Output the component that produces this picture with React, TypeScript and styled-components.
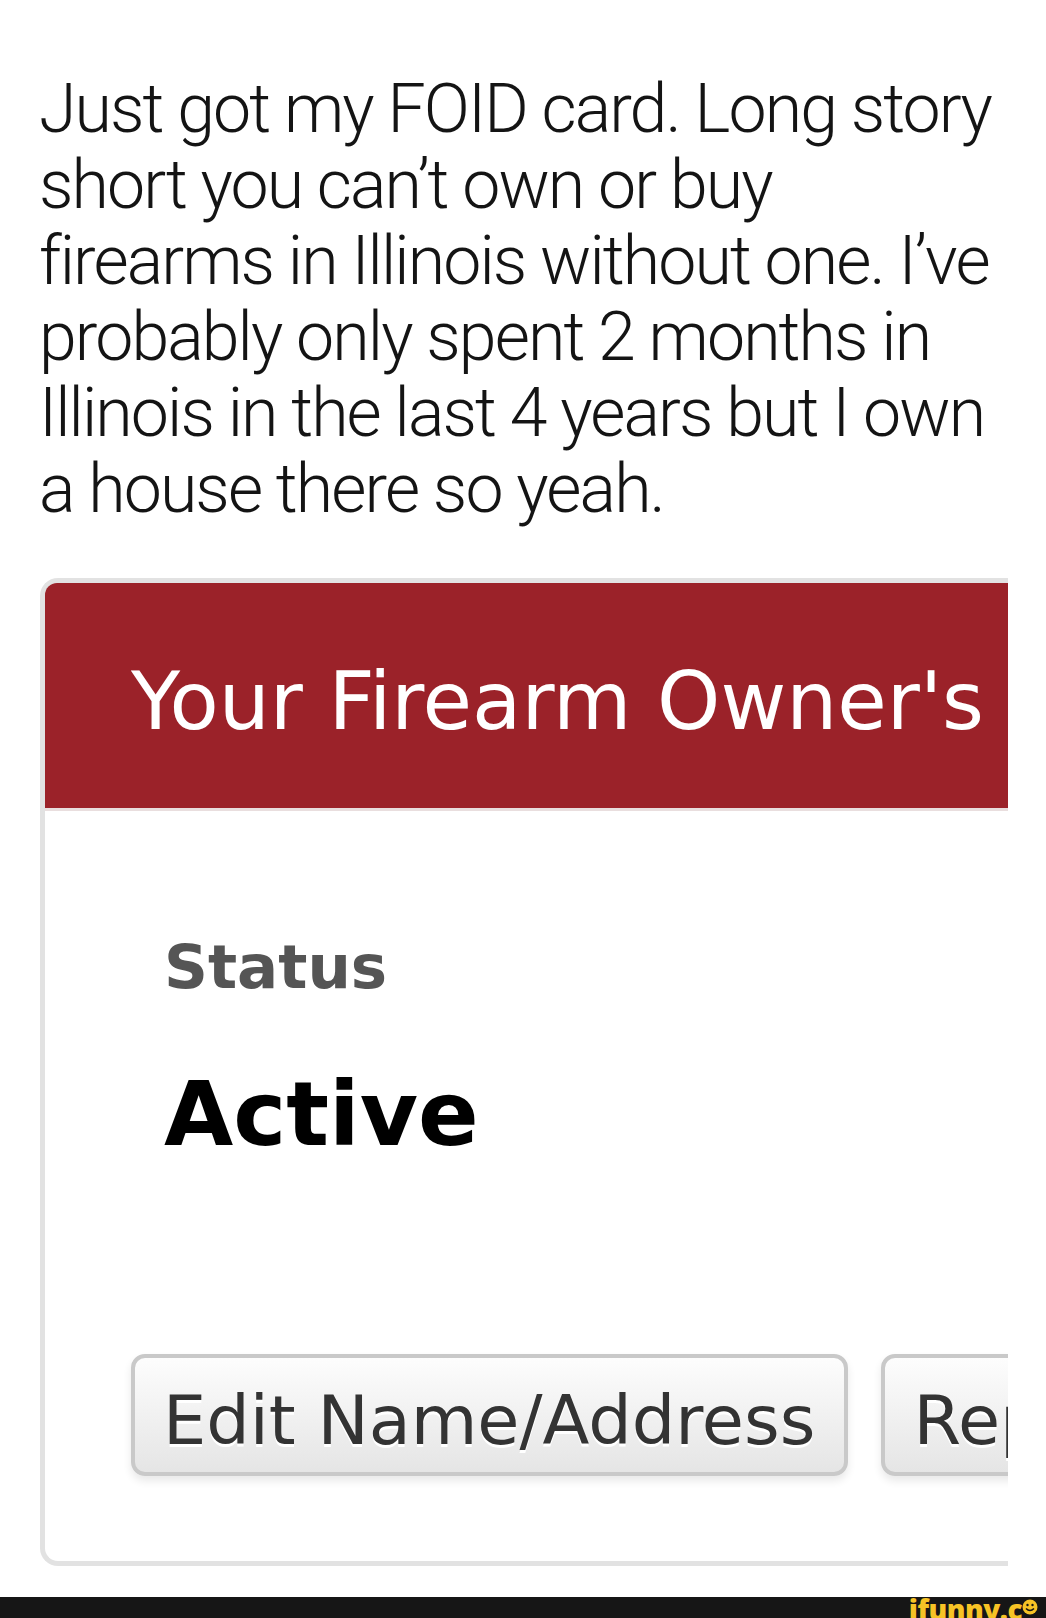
import styled, { createGlobalStyle } from "styled-components";

const GlobalStyle = createGlobalStyle`
  html, body {
    margin: 0;
    padding: 0;
    background: #ffffff;
  }
  body {
    width: 1046px;
    overflow-x: hidden;
  }
`;

const lines = [
  "Just got my FOID card. Long story",
  "short you can’t own or buy",
  "firearms in Illinois without one. I’ve",
  "probably only spent 2 months in",
  "Illinois in the last 4 years but I own",
  "a house there so yeah.",
];

const Page = styled.main`
  display: flex;
  flex-direction: column;
  width: 1046px;
`;

const Post = styled.section`
  padding: 71px 0 0 39px;
  color: #141414;
  font-family: Roboto, "Liberation Sans", Arial, sans-serif;
  font-weight: 300;
  font-size: 68px;
  line-height: 76px;
  letter-spacing: -1.9px;
`;

const PostLine = styled.div`
  white-space: nowrap;
`;

/* the portal is cut off at the right edge of the capture */
const Viewport = styled.div`
  margin-top: 51px;
  padding-left: 40px;
  width: 1008px;
  box-sizing: border-box;
  overflow: hidden;
`;

const Card = styled.div`
  width: 1100px;
  border: 5px solid #e2e2e2;
  border-right: none;
  border-radius: 18px 0 0 18px;
  background: #fff;
  display: flex;
  flex-direction: column;
`;

const CardHeader = styled.header`
  background: #9b2229;
  border-top-left-radius: 12px;
  border-bottom: 3px solid #e9dede;
  padding: 78px 0 67px 86px;
  color: #fff;
  font-family: "DejaVu Sans", Verdana, sans-serif;
  font-size: 80.5px;
  line-height: 80px;
  white-space: nowrap;
`;

const CardBody = styled.div`
  display: flex;
  flex-direction: column;
  padding: 125px 0 85px 0;
`;

const Field = styled.div`
  display: flex;
  flex-direction: column;
  gap: 73px;
  padding-left: 119px;
  font-family: "DejaVu Sans", Verdana, sans-serif;
  font-weight: bold;
`;

const FieldLabel = styled.div`
  color: #555555;
  font-size: 61px;
  line-height: 61px;
`;

const FieldValue = styled.div`
  color: #000;
  font-size: 89.5px;
  line-height: 89px;
`;

const Actions = styled.div`
  display: flex;
  gap: 33px;
  margin-top: 195px;
  padding-left: 86px;
`;

const Button = styled.button`
  flex: none;
  height: 122px;
  box-sizing: border-box;
  padding: 28px 29px 18px 28px;
  border: 4px solid #c9c9c9;
  border-radius: 14px;
  background: linear-gradient(#fdfdfd, #e5e5e5);
  box-shadow: 0 5px 8px rgba(0, 0, 0, 0.09);
  color: #333;
  font-family: "DejaVu Sans", Verdana, sans-serif;
  font-size: 68.5px;
  line-height: 68px;
  text-shadow: 0 3px 0 #fff;
  white-space: nowrap;
  display: flex;
  align-items: flex-start;
`;

const Spacer = styled.div`
  height: 31px;
`;

const WatermarkBar = styled.footer`
  height: 21px;
  background: #161616;
  display: flex;
  justify-content: flex-end;
  align-items: flex-start;
  padding-right: 8px;
  overflow: hidden;
`;

const Brand = styled.span`
  display: flex;
  align-items: flex-start;
  color: #f7c325;
  font-family: "Open Sans", sans-serif;
  font-weight: 800;
  font-size: 28px;
  line-height: 28px;
  letter-spacing: -0.5px;
  margin-top: -2px;
`;

const Smiley = () => (
  <svg width="16" height="16" viewBox="0 0 16 16" style={{ marginTop: 4 }}>
    <circle cx="8" cy="8" r="7.5" fill="#f7c325" />
    <circle cx="5.5" cy="6" r="1.2" fill="#161616" />
    <circle cx="10.5" cy="6" r="1.2" fill="#161616" />
    <path d="M4 9.5 Q8 13.5 12 9.5" stroke="#161616" strokeWidth="1.6" fill="none" />
  </svg>
);

export default function App() {
  return (
    <>
      <GlobalStyle />
      <Page>
        <Post>
          {lines.map((l) => (
            <PostLine key={l}>{l}</PostLine>
          ))}
        </Post>
        <Viewport>
          <Card>
            <CardHeader>Your Firearm Owner's</CardHeader>
            <CardBody>
              <Field>
                <FieldLabel>Status</FieldLabel>
                <FieldValue>Active</FieldValue>
              </Field>
              <Actions>
                <Button>Edit Name/Address</Button>
                <Button>Replace Card</Button>
              </Actions>
            </CardBody>
          </Card>
        </Viewport>
        <Spacer />
        <WatermarkBar>
          <Brand>
            ifunny.c
            <Smiley />
          </Brand>
        </WatermarkBar>
      </Page>
    </>
  );
}
